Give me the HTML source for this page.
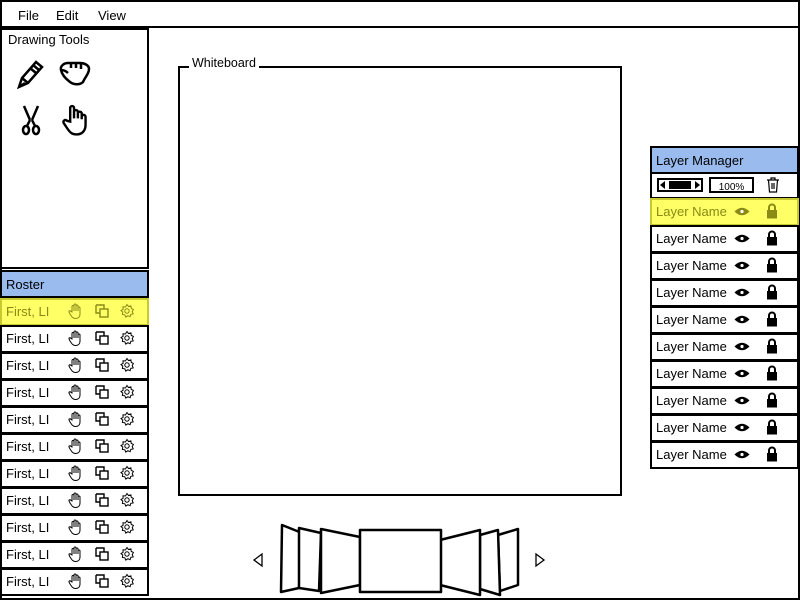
<!DOCTYPE html>
<html><head><meta charset="utf-8"><style>
*{margin:0;padding:0;box-sizing:border-box}
body{width:800px;height:600px;position:relative;background:#fff;font-family:"Liberation Sans",sans-serif;font-size:13px;color:#000;overflow:hidden}
.a{position:absolute}
.box{position:absolute;border:2px solid #000;background:#fff}
.row{position:absolute;height:27px;border:2px solid #000;background:#fff;border-top:none}
.row span{position:absolute;left:4px;top:4px}
.hl{background:#ffff66;border:2px solid #c8c830;color:#8a8a15}
.hdr{background:#99bbee}
svg.i{position:absolute}
</style></head><body>
<svg width="0" height="0" style="position:absolute">
<defs>
<symbol id="hand" viewBox="0 0 16 16"><path d="M5 9V3.5a1 1 0 0 1 2 0V8V2a1 1 0 0 1 2 0v6V3a1 1 0 0 1 2 0v5V5a1 1 0 0 1 2 0v6c0 3-2 4.5-4.5 4.5S5 14 3 11l-1-2a1 1 0 0 1 2-.5z" fill="none" stroke="currentColor" stroke-width="1"/></symbol>
<symbol id="copy" viewBox="0 0 16 16"><path d="M2 2h8v4M2 2v8h4" fill="none" stroke="currentColor" stroke-width="1.4"/><rect x="6" y="6" width="8" height="8" fill="none" stroke="currentColor" stroke-width="1.4"/></symbol>
<symbol id="gear" viewBox="0 0 16 16"><path d="M8 1.5l1.5 2 2.4-.6.3 2.4 2.2 1.2-1.2 2.1 1 2.3-2.4.5-.7 2.3-2.2-1-2.1 1.4-1-2.3-2.4-.3.4-2.4L2 7.6l2.1-1.3-.1-2.5 2.4.2z" fill="none" stroke="currentColor" stroke-width="1"/><circle cx="8" cy="8" r="2.2" fill="none" stroke="currentColor" stroke-width="1"/></symbol>
<symbol id="eye" viewBox="0 0 16 10"><path d="M0.5 5Q8-2.5 15.5 5Q8 12.5 0.5 5z" fill="currentColor"/><circle cx="8" cy="5" r="1.6" fill="#fff"/></symbol>
<symbol id="lock" viewBox="0 0 12 16"><path d="M3 7V4.5a3 3 0 0 1 6 0V7" fill="none" stroke="currentColor" stroke-width="2"/><rect x="1" y="7" width="10" height="8.5" fill="currentColor"/></symbol>
</defs></svg>

<div class="a" style="left:0;top:0;width:800px;height:600px;border:2px solid #000"></div>
<div class="a" style="left:0;top:26px;width:800px;height:2px;background:#000"></div>
<div class="a" style="left:18px;top:8px">File</div>
<div class="a" style="left:56px;top:8px">Edit</div>
<div class="a" style="left:98px;top:8px">View</div>

<div class="box" style="left:0;top:28px;width:149px;height:241px"></div>
<div class="a" style="left:8px;top:32px">Drawing Tools</div>
<svg class="i" style="left:16px;top:58px" width="30" height="32" viewBox="0 0 30 32"><path d="M3 29l3-9L20 4l6 5L12 25z M6 20l6 5 M17 7l6 5 M14 10l6 5 M3 29l6-4" fill="none" stroke="#000" stroke-width="2.5"/></svg>
<svg class="i" style="left:58px;top:60px" width="34" height="28" viewBox="0 0 34 28"><path d="M3 10C2 6 6 3 10 3h12c4 0 9 2 9 6 0 5-4 8-6 13-3 3-9 3-13 0-4-3-8-7-9-12zM3 10c3 0 5 1 7 3M13 3v5M18 3v5M23 4v5" fill="none" stroke="#000" stroke-width="2.5"/></svg>
<svg class="i" style="left:20px;top:104px" width="22" height="32" viewBox="0 0 22 32"><path d="M4 2l6 14M18 2l-6 14M10 16l-3 6M12 16l3 6" fill="none" stroke="#000" stroke-width="2.5"/><ellipse cx="6" cy="26" rx="3" ry="4" fill="none" stroke="#000" stroke-width="2.5"/><ellipse cx="16" cy="26" rx="3" ry="4" fill="none" stroke="#000" stroke-width="2.5"/></svg>
<svg class="i" style="left:62px;top:104px" width="26" height="32" viewBox="0 0 16 20"><path d="M5 11V2.5a1.2 1.2 0 0 1 2.4 0V9V5a1.2 1.2 0 0 1 2.4 0v4V6a1.2 1.2 0 0 1 2.4 0v3.5V8a1.2 1.2 0 0 1 2.4 0v5c0 4-2.5 6-5.5 6S5 18 3 15l-2-3a1.2 1.2 0 0 1 2-1.5z" fill="none" stroke="#000" stroke-width="1.5"/></svg>

<div class="box hdr" style="left:0;top:270px;width:149px;height:28px"><span class="a" style="left:4px;top:5px">Roster</span></div>
<div class="row hl" style="left:0;top:298px;width:149px;border-top:2px solid #c8c830;height:28px"><span>First, LI</span></div>
<div id="roster"></div>

<div class="a" style="left:178px;top:66px;width:444px;height:430px;border:2px solid #000"></div>
<div class="a" style="left:189px;top:56px;background:#fff;padding:0 3px;font-size:12.5px">Whiteboard</div>

<div class="box hdr" style="left:650px;top:146px;width:149px;height:28px"><span class="a" style="left:4px;top:5px">Layer Manager</span></div>
<div class="row" style="left:650px;top:174px;width:149px;height:25px"></div>
<div class="a" style="left:657px;top:178px;width:46px;height:14px;border:2px solid #000"></div>
<div class="a" style="left:669px;top:181px;width:22px;height:8px;background:#000"></div>
<div class="a" style="left:660px;top:181px;width:0;height:0;border:4px solid transparent;border-right:5px solid #000;border-left:none"></div>
<div class="a" style="left:695px;top:181px;width:0;height:0;border:4px solid transparent;border-left:5px solid #000;border-right:none"></div>
<div class="a" style="left:709px;top:177px;width:45px;height:16px;border:2px solid #000;font-size:10px;text-align:center;line-height:14px;padding-top:2px">100%</div>
<svg class="i" style="left:766px;top:177px" width="14" height="16" viewBox="0 0 14 16"><path d="M1 3h12M5 3V1h4v2M2.5 3l1 12h7l1-12M6 6v6M8 6v6" fill="none" stroke="#000" stroke-width="1.2"/></svg>
<div id="layers"></div>

<svg class="i" style="left:240px;top:515px" width="320" height="85" viewBox="0 0 320 85">
<g fill="#fff" stroke="#000" stroke-width="2.5" stroke-linejoin="round">
<path d="M42 10l20 8-3 55-18 4z"/>
<path d="M59 13l22 5-2 58-20 -3z"/>
<path d="M81 14l39 8v48l-39 8z"/>
<path d="M278 14l-20 6 2 56 18-6z"/>
<path d="M258 15l-18 5v54l20 6z"/>
<path d="M240 15l-40 10v45l40 10z"/>
<rect x="120" y="15" width="81" height="62"/>
</g>
<path d="M22 39l-8 6 8 6z M296 39l8 6-8 6z" fill="none" stroke="#000" stroke-width="1.3"/>
</svg>

<script>
var r='',y=325;
for(var k=0;k<10;k++){r+='<div class="row" style="left:0;top:'+y+'px;width:149px;height:28px;border-top:2px solid #000"><span>First, LI</span></div>';y+=27;}
document.getElementById('roster').outerHTML=r;
var ic='';
for(var k=0;k<11;k++){var t=303+27*k,c=k==0?'#8a8a15':'#000';
ic+='<svg class="i" style="left:67px;top:'+t+'px;color:'+c+'" width="16" height="16"><use href="#hand"/></svg>'+
'<svg class="i" style="left:94px;top:'+t+'px;color:'+c+'" width="16" height="16"><use href="#copy"/></svg>'+
'<svg class="i" style="left:119px;top:'+t+'px;color:'+c+'" width="16" height="16"><use href="#gear"/></svg>';}
var l='';y=198;
for(var k=0;k<10;k++){var h=k==0;
l+='<div class="row'+(h?' hl':'')+'" style="left:650px;top:'+y+'px;width:149px;height:28px;border-top:2px solid '+(h?'#c8c830':'#000')+'"><span>Layer Name</span></div>';
var c=h?'#8a8a15':'#000';
ic+='<svg class="i" style="left:734px;top:'+(y+8)+'px;color:'+c+'" width="16" height="11"><use href="#eye"/></svg>'+
'<svg class="i" style="left:766px;top:'+(y+5)+'px;color:'+c+'" width="12" height="16"><use href="#lock"/></svg>';
y+=27;}
document.getElementById('layers').outerHTML=l+ic;
</script>
</body></html>
